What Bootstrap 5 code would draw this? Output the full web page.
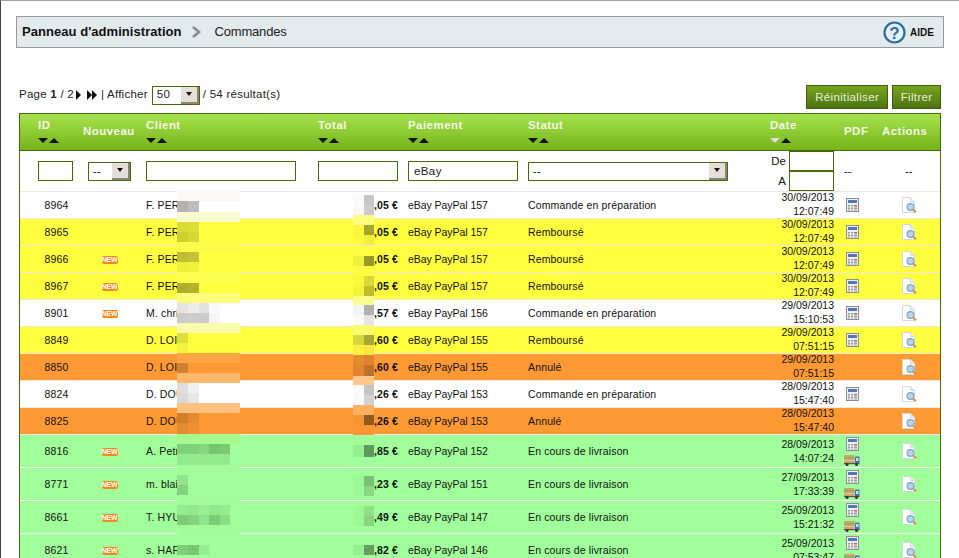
<!DOCTYPE html>
<html lang="fr">
<head>
<meta charset="utf-8">
<title>Commandes</title>
<link href="https://cdn.jsdelivr.net/npm/bootstrap@5.3.0/dist/css/bootstrap.min.css" rel="stylesheet">
<style>
html,body{overflow:hidden;height:558px}
body{position:relative;margin:0;border-top:1px solid #9aa3ad;border-left:1px solid #444;background:#fff;color:#111;font-family:"Liberation Sans",Arial,sans-serif;font-size:11px;letter-spacing:.15px}
.crumb{margin:15px 15px 0 15px;height:32px;background:#e2eaec;border:1px solid #999;padding:0 9px 0 5px}
.crumb b{font-size:13px;letter-spacing:.05px;color:#111}
.crumb .chev{margin:0 10px 0 7px}
.crumb .here{font-size:13px;letter-spacing:-.2px;color:#222}
.crumb .aide{font-size:10px;font-weight:700;letter-spacing:0}
.tools{margin:37px 18px 0 18px;height:28px}
.pager{font-size:11.5px;letter-spacing:.25px;height:20px;color:#222}
.tri{display:inline-block;width:0;height:0;border-style:solid;border-color:transparent}
.tri.nx{border-width:5px 0 5px 5px;border-left-color:#111}
.tri.dn{border-width:5px 5.5px 0 5.5px;border-top-color:#111}
.tri.up{border-width:0 5.5px 5px 5.5px;border-bottom-color:#111}
.tri.dn.off{border-top-color:#ddd}
.nx-a{margin-left:2px}
.nx-b{margin-left:6px}
.fake{display:inline-flex;align-items:center;position:relative;border:1px solid #446a0c;background:#fff;height:19px;font-size:11.5px;padding-left:4px}
.fake .arw{position:absolute;right:0;top:0;bottom:0;width:18px;background:#e6dfd8;border-right:2px solid #8a8378;border-bottom:2px solid #8a8378;display:flex;align-items:center;justify-content:center}
.fake .tri{border-width:4px 3.5px 0 3.5px;border-top-color:#111}
.gobtn{height:24px;padding:0 8px;font-size:11.5px;letter-spacing:.35px;color:#e8f0d8;border:1px solid #3f5f10;border-radius:0;background:linear-gradient(#76a520,#4d7412);line-height:22px}
.gobtn:hover{color:#e8f0d8}
.gobtn.slim{padding:0 7.5px}
.panel{margin:0 18px;border:1px solid #446a0c;border-bottom:0}
.cmd{table-layout:fixed;width:920px;--bs-table-bg:transparent;--bs-table-color:#111;border-collapse:separate;border-spacing:0}
.cmd th{padding:0 5px;height:37px;background:linear-gradient(#a6e24d,#76b31a);color:#f2f8e6;font-size:11.5px;letter-spacing:.45px;font-weight:700;border-bottom:1px solid #446a0c;vertical-align:middle}
.cmd th .lbl{display:block;line-height:14px;margin-top:-1px}
.cmd th .srt{display:flex;gap:1px;height:5px;margin-top:6px;margin-bottom:3px}
.cmd th .srt .tri{border-width:5px 5px 0 5px}
.cmd th .srt .tri.up{border-width:0 5px 5px 5px}
.cmd td{padding:0 5px;height:27px;vertical-align:middle;border-bottom:1px solid #ece8df;font-size:10.5px;line-height:14px;white-space:nowrap}
.cmd td.idc{padding-left:6px;padding-right:4px}
.cmd .frow td{height:41px;font-size:11px}
.cmd .tall td{height:33px}
.inp{display:block;height:20px;width:100%;border:1px solid #446a0c;background:#fff;border-radius:0;padding:0 5px;font-size:11.5px;letter-spacing:.4px;color:#222;outline:0}
.r-w td{background:#fff}
.r-y td{background:#ffff40}
.r-o td{background:#ff9933}
.r-g td{background:#a0ff9b;border-bottom-color:#f0f6ee}
.ctr{text-align:center}
.amt{text-align:right;font-weight:700}
.cmd td.pay{letter-spacing:-.05px}
.dtm{text-align:right;font-size:11px;letter-spacing:0}
.dl{margin:-2px 0 0}
.newtag{display:inline-block;width:16px;height:8px;border-radius:2px;background:#f28a1e;color:#fff;font-size:7px;line-height:8px;font-weight:700;letter-spacing:-.3px;text-align:center;vertical-align:middle}
.dateF{display:grid;grid-template-columns:1fr 45px;align-items:center;line-height:20px;text-align:right;column-gap:3px;font-size:11.5px;letter-spacing:0}
.dateF .inp{padding:0}
.ico{display:block}
.cal{margin-left:2px}
.act{padding-left:25px !important}
.blur{position:absolute;left:-1px;top:-1px;width:959px;height:558px;pointer-events:none}
</style>
</head>
<body>
<svg width="0" height="0" class="position-absolute">
<symbol id="i-cal" viewBox="0 0 13 14">
<rect x=".5" y=".5" width="12" height="13" fill="#eef0f2" stroke="#8b8f94"/>
<rect x="2" y="2" width="9" height="3" fill="#4d78b5"/>
<g fill="#9a9ea3"><rect x="2" y="7" width="2" height="1.5"/><rect x="5" y="7" width="2" height="1.5"/><rect x="2" y="9.5" width="2" height="1.5"/><rect x="5" y="9.5" width="2" height="1.5"/><rect x="8" y="9.5" width="3" height="1.5"/><rect x="2" y="11.5" width="2" height="1"/><rect x="5" y="11.5" width="2" height="1"/><rect x="8" y="11.5" width="3" height="1"/></g>
<rect x="8" y="7" width="3" height="1.5" fill="#d0564c"/>
</symbol>
<symbol id="i-doc" viewBox="0 0 15 16">
<path d="M.5.5H8.5L12.5 4.5V15.5H.5Z" fill="#fff" stroke="#d4d8dc"/>
<path d="M8.5.5V4.5H12.5" fill="#eef0f2" stroke="#d4d8dc"/>
<circle cx="8.5" cy="10" r="3.4" fill="#b9d3ea" stroke="#7fa6c6" stroke-width="1.2"/>
<path d="M11.2 12.7L14 15.2" stroke="#d98d4e" stroke-width="2"/>
</symbol>
<symbol id="i-trk" viewBox="0 0 16 11">
<rect x="0" y="0" width="10.5" height="8.5" fill="#cfa468"/>
<rect x="0" y="2" width="10.5" height="1.5" fill="#7fb36a"/>
<rect x="0" y="5" width="10.5" height="1" fill="#e7c79a"/>
<rect x="11" y="1.5" width="4.5" height="7.5" rx="1" fill="#3f6fc0"/>
<rect x="12" y="3" width="2.5" height="3" fill="#cfe0f5"/>
<rect x="0" y="8" width="15.5" height="1.2" fill="#555"/>
<circle cx="3" cy="9.5" r="1.5" fill="#333"/><circle cx="12.5" cy="9.5" r="1.5" fill="#333"/>
</symbol>
</svg>

<div class="crumb d-flex align-items-center">
  <b>Panneau d'administration</b>
  <svg class="chev" width="16" height="14" viewBox="0 0 16 14"><path d="M4 2L10 7L4 12" fill="none" stroke="#8a8a8a" stroke-width="2.6"/></svg>
  <span class="here">Commandes</span>
  <span class="ms-auto d-flex align-items-center gap-1">
    <svg width="23" height="23" viewBox="0 0 23 23"><circle cx="11.5" cy="11.5" r="10" fill="#e8f0f6" stroke="#2b6ca8" stroke-width="2.2"/><text x="11.5" y="17.5" text-anchor="middle" font-family="Liberation Sans" font-weight="700" font-size="17" fill="#2b6ca8">?</text></svg>
    <span class="aide">AIDE</span>
  </span>
</div>

<div class="tools d-flex justify-content-between align-items-start">
  <div class="pager d-flex align-items-center">
    <span>Page <b>1</b> / 2</span>
    <span class="tri nx nx-a"></span>
    <span class="tri nx nx-b"></span><span class="tri nx"></span>
    <span class="ms-1">| Afficher</span>
    <span class="fake" style="width:48px;margin:0 3px 0 4px"><span>50</span><span class="arw"><span class="tri"></span></span></span>
    <span>/ 54 résultat(s)</span>
  </div>
  <div class="d-flex gap-1">
    <button type="button" class="btn gobtn">Réinitialiser</button>
    <button type="button" class="btn gobtn slim">Filtrer</button>
  </div>
</div>

<div class="panel">
<table class="table cmd mb-0">
<colgroup><col style="width:13px"><col style="width:45px"><col style="width:63px"><col style="width:172px"><col style="width:90px"><col style="width:120px"><col style="width:242px"><col style="width:74px"><col style="width:38px"><col style="width:53px"><col style="width:10px"></colgroup>
<thead>
<tr>
<th></th>
<th><span class="lbl">ID</span><div class="srt"><span class="tri dn"></span><span class="tri up"></span></div></th>
<th>Nouveau</th>
<th><span class="lbl">Client</span><div class="srt"><span class="tri dn"></span><span class="tri up"></span></div></th>
<th><span class="lbl">Total</span><div class="srt"><span class="tri dn"></span><span class="tri up"></span></div></th>
<th><span class="lbl">Paiement</span><div class="srt"><span class="tri dn"></span><span class="tri up"></span></div></th>
<th><span class="lbl">Statut</span><div class="srt"><span class="tri dn"></span><span class="tri up"></span></div></th>
<th><span class="lbl">Date</span><div class="srt"><span class="tri dn off"></span><span class="tri up"></span></div></th>
<th>PDF</th>
<th>Actions</th>
<th></th>
</tr>
</thead>
<tbody>
<tr class="frow">
<td></td>
<td><input class="inp" type="text"></td>
<td class="ctr"><span class="fake text-start" style="width:43px"><span>--</span><span class="arw"><span class="tri"></span></span></span></td>
<td><input class="inp" type="text" style="width:150px"></td>
<td><input class="inp" type="text"></td>
<td><input class="inp" type="text" value="eBay"></td>
<td><span class="fake" style="width:200px"><span>--</span><span class="arw"><span class="tri"></span></span></span></td>
<td><div class="dateF"><span>De</span><input class="inp" type="text"><span>A</span><input class="inp" type="text"></div></td>
<td>--</td>
<td style="padding-left:28px">--</td>
<td></td>
</tr>

<tr class="r-w"><td></td><td class="ctr idc">8964</td><td class="ctr"></td><td>F. PER</td><td class="amt">,05 €</td><td class="pay">eBay PayPal 157</td><td>Commande en préparation</td><td class="dtm"><div class="dl">30/09/2013<br>12:07:49</div></td><td><svg class="ico cal" width="13" height="14"><use href="#i-cal"/></svg></td><td class="act"><svg class="ico" width="15" height="16"><use href="#i-doc"/></svg></td><td></td></tr>
<tr class="r-y"><td></td><td class="ctr idc">8965</td><td class="ctr"></td><td>F. PER</td><td class="amt">,05 €</td><td class="pay">eBay PayPal 157</td><td>Remboursé</td><td class="dtm"><div class="dl">30/09/2013<br>12:07:49</div></td><td><svg class="ico cal" width="13" height="14"><use href="#i-cal"/></svg></td><td class="act"><svg class="ico" width="15" height="16"><use href="#i-doc"/></svg></td><td></td></tr>
<tr class="r-y"><td></td><td class="ctr idc">8966</td><td class="ctr"><span class="newtag">NEW</span></td><td>F. PER</td><td class="amt">,05 €</td><td class="pay">eBay PayPal 157</td><td>Remboursé</td><td class="dtm"><div class="dl">30/09/2013<br>12:07:49</div></td><td><svg class="ico cal" width="13" height="14"><use href="#i-cal"/></svg></td><td class="act"><svg class="ico" width="15" height="16"><use href="#i-doc"/></svg></td><td></td></tr>
<tr class="r-y"><td></td><td class="ctr idc">8967</td><td class="ctr"><span class="newtag">NEW</span></td><td>F. PER</td><td class="amt">,05 €</td><td class="pay">eBay PayPal 157</td><td>Remboursé</td><td class="dtm"><div class="dl">30/09/2013<br>12:07:49</div></td><td><svg class="ico cal" width="13" height="14"><use href="#i-cal"/></svg></td><td class="act"><svg class="ico" width="15" height="16"><use href="#i-doc"/></svg></td><td></td></tr>
<tr class="r-w"><td></td><td class="ctr idc">8901</td><td class="ctr"><span class="newtag">NEW</span></td><td>M. chri</td><td class="amt">,57 €</td><td class="pay">eBay PayPal 156</td><td>Commande en préparation</td><td class="dtm"><div class="dl">29/09/2013<br>15:10:53</div></td><td><svg class="ico cal" width="13" height="14"><use href="#i-cal"/></svg></td><td class="act"><svg class="ico" width="15" height="16"><use href="#i-doc"/></svg></td><td></td></tr>
<tr class="r-y"><td></td><td class="ctr idc">8849</td><td class="ctr"></td><td>D. LOI</td><td class="amt">,60 €</td><td class="pay">eBay PayPal 155</td><td>Remboursé</td><td class="dtm"><div class="dl">29/09/2013<br>07:51:15</div></td><td><svg class="ico cal" width="13" height="14"><use href="#i-cal"/></svg></td><td class="act"><svg class="ico" width="15" height="16"><use href="#i-doc"/></svg></td><td></td></tr>
<tr class="r-o"><td></td><td class="ctr idc">8850</td><td class="ctr"></td><td>D. LOI</td><td class="amt">,60 €</td><td class="pay">eBay PayPal 155</td><td>Annulé</td><td class="dtm"><div class="dl">29/09/2013<br>07:51:15</div></td><td></td><td class="act"><svg class="ico" width="15" height="16"><use href="#i-doc"/></svg></td><td></td></tr>
<tr class="r-w"><td></td><td class="ctr idc">8824</td><td class="ctr"></td><td>D. DOU</td><td class="amt">,26 €</td><td class="pay">eBay PayPal 153</td><td>Commande en préparation</td><td class="dtm"><div class="dl">28/09/2013<br>15:47:40</div></td><td><svg class="ico cal" width="13" height="14"><use href="#i-cal"/></svg></td><td class="act"><svg class="ico" width="15" height="16"><use href="#i-doc"/></svg></td><td></td></tr>
<tr class="r-o"><td></td><td class="ctr idc">8825</td><td class="ctr"></td><td>D. DOU</td><td class="amt">,26 €</td><td class="pay">eBay PayPal 153</td><td>Annulé</td><td class="dtm"><div class="dl">28/09/2013<br>15:47:40</div></td><td></td><td class="act"><svg class="ico" width="15" height="16"><use href="#i-doc"/></svg></td><td></td></tr>
<tr class="r-g tall"><td></td><td class="ctr idc">8816</td><td class="ctr"><span class="newtag">NEW</span></td><td>A. Petr</td><td class="amt">,85 €</td><td class="pay">eBay PayPal 152</td><td>En cours de livraison</td><td class="dtm">28/09/2013<br>14:07:24</td><td><svg class="ico cal" width="13" height="14"><use href="#i-cal"/></svg><svg class="ico mt-1" width="16" height="11"><use href="#i-trk"/></svg></td><td class="act"><svg class="ico" width="15" height="16"><use href="#i-doc"/></svg></td><td></td></tr>
<tr class="r-g tall"><td></td><td class="ctr idc">8771</td><td class="ctr"><span class="newtag">NEW</span></td><td>m. blai</td><td class="amt">,23 €</td><td class="pay">eBay PayPal 151</td><td>En cours de livraison</td><td class="dtm">27/09/2013<br>17:33:39</td><td><svg class="ico cal" width="13" height="14"><use href="#i-cal"/></svg><svg class="ico mt-1" width="16" height="11"><use href="#i-trk"/></svg></td><td class="act"><svg class="ico" width="15" height="16"><use href="#i-doc"/></svg></td><td></td></tr>
<tr class="r-g tall"><td></td><td class="ctr idc">8661</td><td class="ctr"><span class="newtag">NEW</span></td><td>T. HYU</td><td class="amt">,49 €</td><td class="pay">eBay PayPal 147</td><td>En cours de livraison</td><td class="dtm">25/09/2013<br>15:21:32</td><td><svg class="ico cal" width="13" height="14"><use href="#i-cal"/></svg><svg class="ico mt-1" width="16" height="11"><use href="#i-trk"/></svg></td><td class="act"><svg class="ico" width="15" height="16"><use href="#i-doc"/></svg></td><td></td></tr>
<tr class="r-g tall"><td></td><td class="ctr idc">8621</td><td class="ctr"><span class="newtag">NEW</span></td><td>s. HAR</td><td class="amt">,82 €</td><td class="pay">eBay PayPal 146</td><td>En cours de livraison</td><td class="dtm">25/09/2013<br>07:53:47</td><td><svg class="ico cal" width="13" height="14"><use href="#i-cal"/></svg><svg class="ico mt-1" width="16" height="11"><use href="#i-trk"/></svg></td><td class="act"><svg class="ico" width="15" height="16"><use href="#i-doc"/></svg></td><td></td></tr>
</tbody>
</table>
</div>

<svg class="blur" id="blur" viewBox="0 0 959 558"></svg>
<script>
var C=[[191,10,[[177,63,'#faf9f8']]],[201,11,[[177,11,'#b2b2b2'],[188,11,'#bdbdbd']]],[212,10,[[177,63,'#f9fad0']]],
[222,10,[[177,11,'#dbdb35'],[188,11,'#dddd3c']]],[232,10,[[177,11,'#cfcf30'],[188,11,'#d8d838']]],[242,10,[[177,63,'#fbfb4c']]],
[252,10,[[177,11,'#bebe30'],[188,11,'#c4c436']]],[262,10,[[177,11,'#efef3a'],[188,11,'#f2f23c']]],[272,11,[[177,63,'#fdfd4e']]],
[283,10,[[177,11,'#aeae28'],[188,11,'#b4b42c']]],[293,10,[[177,63,'#fdfd7c']]],
[303,10,[[177,11,'#e4e4e4'],[188,11,'#ececec'],[199,10,'#e2e2e2'],[209,11,'#fafafa']]],[313,10,[[177,11,'#cbcbcb'],[188,11,'#cdcdcd'],[199,10,'#cacaca'],[209,11,'#f4f4f4']]],
[323,10,[[177,63,'#fbfbb0']]],[333,10,[[177,11,'#dfdf3c']]],[343,10,[[177,11,'#f4f43e']]],[353,10,[[177,63,'#ffa545']]],[363,10,[[177,11,'#d58030']]],
[373,10,[[177,63,'#ffb76d']]],[383,10,[[177,11,'#dedede'],[188,11,'#f0f0f0']]],[393,10,[[177,11,'#dadada'],[188,11,'#e6e6e6']]],[403,10,[[177,63,'#ffc080']]],
[413,10,[[177,11,'#cf7f2c'],[188,11,'#e48c30']]],[423,11,[[177,11,'#e48a30'],[188,11,'#ef9032']]],[434,10,[[177,63,'#a6fb90']]],
[444,10,[[177,22,'#7fd078'],[199,10,'#86d880'],[209,11,'#76c670'],[220,10,'#7acb74']]],[454,11,[[177,53,'#94eb8e']]],[465,10,[[177,63,'#a4fb9a']]],
[475,10,[[177,11,'#92e58c']]],[485,10,[[177,11,'#84d47e']]],[495,10,[[177,63,'#a3fb99']]],
[505,10,[[177,11,'#96ec90'],[188,11,'#93e88d'],[199,10,'#99f093'],[209,11,'#93e88d'],[220,10,'#96ec90']]],
[515,10,[[177,11,'#7ccc76'],[188,11,'#84d47e'],[199,10,'#90e48a'],[209,11,'#7ccc76'],[220,10,'#8ade84']]],[525,10,[[177,63,'#a3fb99']]],
[545,10,[[177,11,'#80d07a'],[188,11,'#78c872'],[199,10,'#96ee90']]]];
var T=[[195,10,'#f9f9f9','#c6c6c6'],[205,10,'#f8f8f8','#cbcbcb'],[215,10,'#fcfc80','#fcfc80'],[225,10,'#f7f740','#a5a530'],[235,10,'#fbfb3c','#f0f03a'],[247,9,'#fefe44','#fefe44'],
[256,10,'#f0f03a','#999928'],[266,10,'#fdfd44','#fdfd44'],[276,10,'#f9f93c','#d8d83c'],[286,10,'#f4f43a','#bcbc2c'],[296,9,'#fcfc90','#fcfc90'],[305,10,'#f4f4f4','#b0b0b0'],[315,10,'#fafafa','#e4e4e4'],
[325,10,'#fbfb70','#fbfb70'],[335,10,'#d5d53c','#a8a838'],[345,10,'#fdf040','#ffe53f'],[355,10,'#e58c30','#db8430'],[365,11,'#e08430','#c07028'],[376,9,'#ffc88a','#ffc88a'],
[385,10,'#fafafa','#c4c4c4'],[395,10,'#f8f8f8','#d2d2d2'],[405,10,'#ffb060','#ffb060'],[415,10,'#f49432','#8e5a1e'],[425,10,'#fa9636','#fa9636'],
[445,12,'#96f090','#5f9a5c'],[476,10,'#9cf896','#7abf74'],[486,10,'#9cf896','#88d882'],[506,10,'#9cf896','#90e08a'],[516,10,'#9cf896','#86d680'],[545,10,'#96f090','#669e60']];
var s='';
C.forEach(function(r){r[2].forEach(function(b){s+='<rect x="'+b[0]+'" y="'+r[0]+'" width="'+b[1]+'" height="'+r[1]+'" fill="'+b[2]+'"/>';});});
T.forEach(function(r){s+='<rect x="353" y="'+r[0]+'" width="11" height="'+r[1]+'" fill="'+r[2]+'"/><rect x="364" y="'+r[0]+'" width="10" height="'+r[1]+'" fill="'+r[3]+'"/>';});
document.getElementById('blur').innerHTML=s;
</script>
<script src="https://cdn.jsdelivr.net/npm/bootstrap@5.3.0/dist/js/bootstrap.bundle.min.js"></script>
</body>
</html>
